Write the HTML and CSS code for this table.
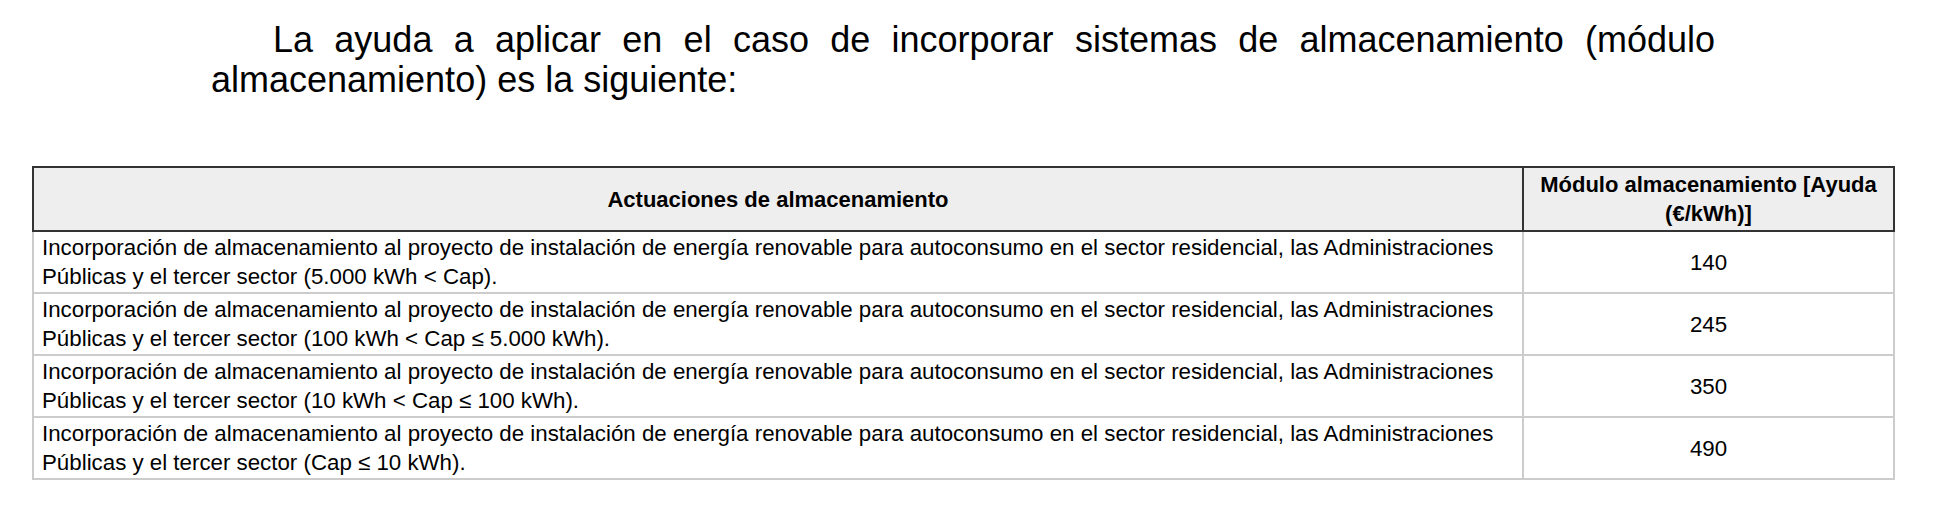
FILE: index.html
```html
<!DOCTYPE html>
<html lang="es">
<head>
<meta charset="utf-8">
<title>Módulo almacenamiento</title>
<link rel="stylesheet" href="styles.css">
</head>
<body>
<p class="intro">La ayuda a aplicar en el caso de incorporar sistemas de almacenamiento (módulo almacenamiento) es la siguiente:</p>
<table class="aid-table">
  <colgroup>
    <col class="col-action">
    <col class="col-value">
  </colgroup>
  <thead>
    <tr>
      <th>Actuaciones de almacenamiento</th>
      <th>Módulo almacenamiento [Ayuda (€/kWh)]</th>
    </tr>
  </thead>
  <tbody>
    <tr>
      <td>Incorporación de almacenamiento al proyecto de instalación de energía renovable para autoconsumo en el sector residencial, las Administraciones Públicas y el tercer sector (5.000 kWh &lt; Cap).</td>
      <td class="num">140</td>
    </tr>
    <tr>
      <td>Incorporación de almacenamiento al proyecto de instalación de energía renovable para autoconsumo en el sector residencial, las Administraciones Públicas y el tercer sector (100 kWh &lt; Cap ≤ 5.000 kWh).</td>
      <td class="num">245</td>
    </tr>
    <tr>
      <td>Incorporación de almacenamiento al proyecto de instalación de energía renovable para autoconsumo en el sector residencial, las Administraciones Públicas y el tercer sector (10 kWh &lt; Cap ≤ 100 kWh).</td>
      <td class="num">350</td>
    </tr>
    <tr>
      <td>Incorporación de almacenamiento al proyecto de instalación de energía renovable para autoconsumo en el sector residencial, las Administraciones Públicas y el tercer sector (Cap ≤ 10 kWh).</td>
      <td class="num">490</td>
    </tr>
  </tbody>
</table>
</body>
</html>
```

FILE: styles.css
```css
html, body {
  margin: 0;
  padding: 0;
  background: #ffffff;
  color: #000000;
  font-family: "Liberation Sans", Arial, sans-serif;
}

.intro {
  margin: 20px 0 0 211px;
  width: 1504px;
  font-size: 36px;
  line-height: 40px;
  text-align: justify;
  text-indent: 62px;
}

.aid-table {
  margin: 66px 0 0 32px;
  width: 1863px;
  border-collapse: collapse;
  table-layout: fixed;
  font-size: 22.3px;
  line-height: 29px;
}

.col-action {
  width: 1490px;
}

.aid-table th {
  background: #eeeeee;
  border: 2px solid #333333;
  padding: 2px 8px;
  font-size: 22px;
  font-weight: bold;
  text-align: center;
  vertical-align: middle;
}

.aid-table td {
  border: 2px solid #cccccc;
  padding: 1px 8px;
  text-align: left;
  vertical-align: middle;
}

.aid-table td.num {
  text-align: center;
}
```
